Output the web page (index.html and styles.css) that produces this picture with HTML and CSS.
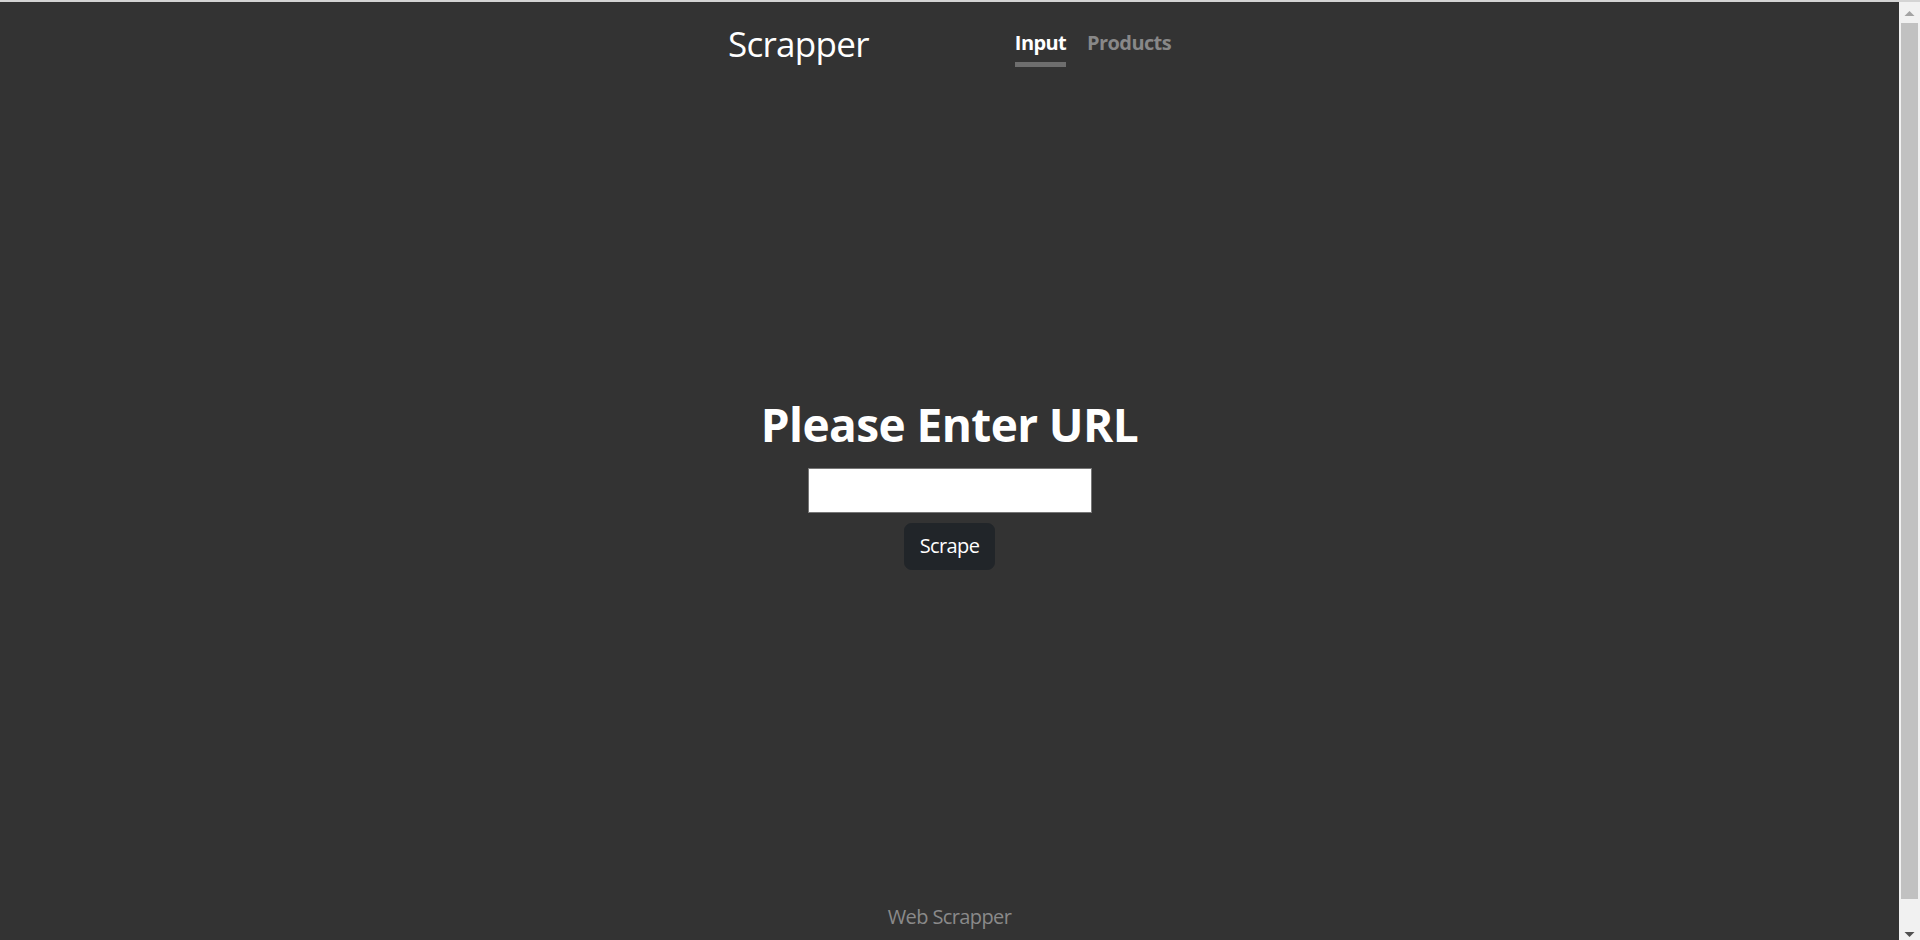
FILE: index.html
```html
<!DOCTYPE html>
<html lang="en">
<head>
<meta charset="utf-8">
<title>Scrapper</title>
<link rel="stylesheet" href="styles.css">
</head>
<body>
<div class="window">
  <div class="page">
    <header class="header">
      <a class="brand" href="#">Scrapper</a>
      <nav class="nav">
        <a class="nav-link active" href="#">Input</a>
        <a class="nav-link" href="#">Products</a>
      </nav>
    </header>
    <main class="main">
      <h1 class="title">Please Enter URL</h1>
      <input class="url-input" type="text" aria-label="URL">
      <button class="btn" type="button">Scrape</button>
    </main>
    <footer class="footer">Web Scrapper</footer>
  </div>
  <div class="scrollbar" aria-hidden="true">
    <div class="sb-button">
      <svg width="21" height="21" viewBox="0 0 21 21"><polygon points="5.5,14 15.5,14 10.5,9" fill="#a3a3a3"/></svg>
    </div>
    <div class="sb-track"><div class="sb-thumb"></div></div>
    <div class="sb-button">
      <svg width="21" height="21" viewBox="0 0 21 21"><polygon points="5.5,13 15.5,13 10.5,18" fill="#505050"/></svg>
    </div>
  </div>
</div>
</body>
</html>
```

FILE: styles.css
```css
html {
  background: #333333;
}
body {
  margin: 0;
  background: #333333;
  border-top: 2px solid #d4d4d4;
  font-family: "Open Sans", "Noto Sans", sans-serif;
  color: #ffffff;
  overflow: hidden;
}
.window {
  display: flex;
  height: 938px;
}
.page {
  flex: 1;
  min-width: 0;
  display: flex;
  flex-direction: column;
  overflow: hidden;
}
.header {
  display: flex;
  justify-content: center;
  align-items: flex-start;
  padding-top: 19px;
  height: 46px;
  flex-shrink: 0;
}
.brand {
  font-size: 35px;
  font-weight: 500;
  letter-spacing: -0.7px;
  line-height: 43px;
  margin-top: 1px;
  color: #ffffff;
  text-decoration: none;
  margin-right: 146px;
}
.nav {
  display: flex;
  gap: 21px;
  margin-top: 10px;
}
.nav-link {
  font-size: 20px;
  font-weight: 700;
  letter-spacing: -0.6px;
  line-height: 24px;
  padding-bottom: 7px;
  border-bottom: 5px solid transparent;
  color: #888888;
  text-decoration: none;
}
.nav-link.active {
  color: #ffffff;
  border-bottom-color: #6e6e6e;
}
.main {
  height: 830px;
  flex-shrink: 0;
  display: flex;
  flex-direction: column;
  align-items: center;
  justify-content: center;
}
.title {
  margin: 0;
  font-size: 46px;
  letter-spacing: -0.6px;
  line-height: 58px;
  font-weight: 700;
}
.url-input {
  box-sizing: border-box;
  margin-top: 15px;
  width: 284px;
  height: 45px;
  border: 1px solid #767676;
  background: #ffffff;
  padding: 0 8px;
  font: inherit;
}
.btn {
  box-sizing: border-box;
  margin-top: 10px;
  width: 91px;
  height: 47px;
  border: 1px solid #212529;
  border-radius: 7.5px;
  background: #212529;
  color: #ffffff;
  font-family: inherit;
  font-size: 20px;
  letter-spacing: -0.6px;
  line-height: 30px;
  padding: 0;
}
.footer {
  flex-shrink: 0;
  text-align: center;
  font-size: 20px;
  letter-spacing: -0.6px;
  line-height: 24px;
  padding: 8px 0 35px;
  color: #8a8a8a;
}
.scrollbar {
  width: 21px;
  flex-shrink: 0;
  display: flex;
  flex-direction: column;
  background: #f1f1f1;
}
.sb-button {
  height: 21px;
  flex-shrink: 0;
}
.sb-button svg {
  display: block;
}
.sb-track {
  flex: 1;
  padding: 0 2px;
}
.sb-thumb {
  height: 876px;
  background: #c1c1c1;
}
```
